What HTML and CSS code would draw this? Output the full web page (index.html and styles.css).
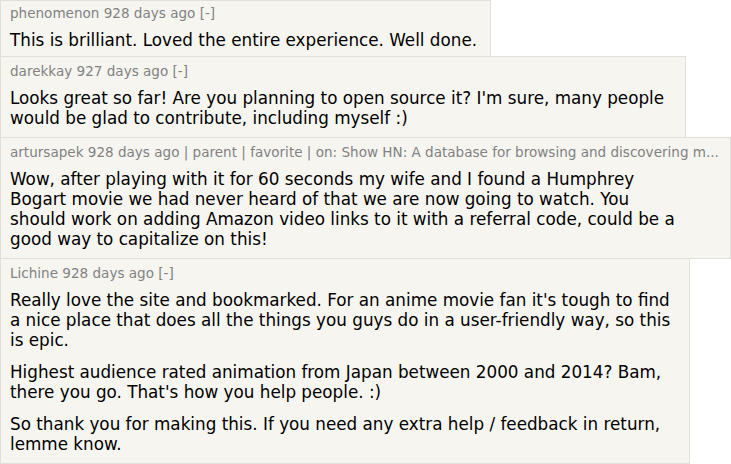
FILE: index.html
```html
<!DOCTYPE html>
<html>
<head>
<meta charset="utf-8">
<link rel="stylesheet" href="styles.css">
</head>
<body>
<div class="thread">
  <div class="comment c1">
    <div class="meta">phenomenon 928 days ago [-]</div>
    <div class="text"><p>This is brilliant. Loved the entire experience. Well done.</p></div>
  </div>
  <div class="comment c2">
    <div class="meta">darekkay 927 days ago [-]</div>
    <div class="text"><p>Looks great so far! Are you planning to open source it? I'm sure, many people would be glad to contribute, including myself :)</p></div>
  </div>
  <div class="comment c3">
    <div class="meta">artursapek 928 days ago | parent | favorite | on: Show HN: A database for browsing and discovering m...</div>
    <div class="text"><p>Wow, after playing with it for 60 seconds my wife and I found a Humphrey Bogart movie we had never heard of that we are now going to watch. You should work on adding Amazon video links to it with a referral code, could be a good way to capitalize on this!</p></div>
  </div>
  <div class="comment c4">
    <div class="meta">Lichine 928 days ago [-]</div>
    <div class="text">
      <p>Really love the site and bookmarked. For an anime movie fan it's tough to find a nice place that does all the things you guys do in a user-friendly way, so this is epic.</p>
      <p>Highest audience rated animation from Japan between 2000 and 2014? Bam, there you go. That's how you help people. :)</p>
      <p>So thank you for making this. If you need any extra help / feedback in return, lemme know.</p>
    </div>
  </div>
</div>
</body>
</html>
```
FILE: styles.css
```css
html, body {
  margin: 0;
  padding: 0;
  background: #ffffff;
}
body {
  font-family: "DejaVu Sans", Verdana, sans-serif;
  color: #000;
}
.thread {
  display: flex;
  flex-direction: column;
  align-items: flex-start;
}
.comment {
  box-sizing: border-box;
  background: #f6f5f0;
  border: 1px solid #e0dfda;
  padding: 5px 9px 9px 9px;
}
.comment + .comment {
  margin-top: -1px;
}
.c1 { width: 491px; padding-top: 3px; padding-bottom: 6px; }
.c1 .text p { margin-top: 7px; }
.c2 { width: 686px; }
.c3 { width: 731px; }
.c4 { width: 690px; }
.meta {
  font-size: 13.55px;
  line-height: 19px;
  color: #828282;
  white-space: nowrap;
  overflow: hidden;
}
.text {
  max-width: 668px;
}
.text p {
  margin: 7px 0 0;
  font-size: 16.8px;
  line-height: 20px;
}
.text p + p {
  margin-top: 12px;
}
```
